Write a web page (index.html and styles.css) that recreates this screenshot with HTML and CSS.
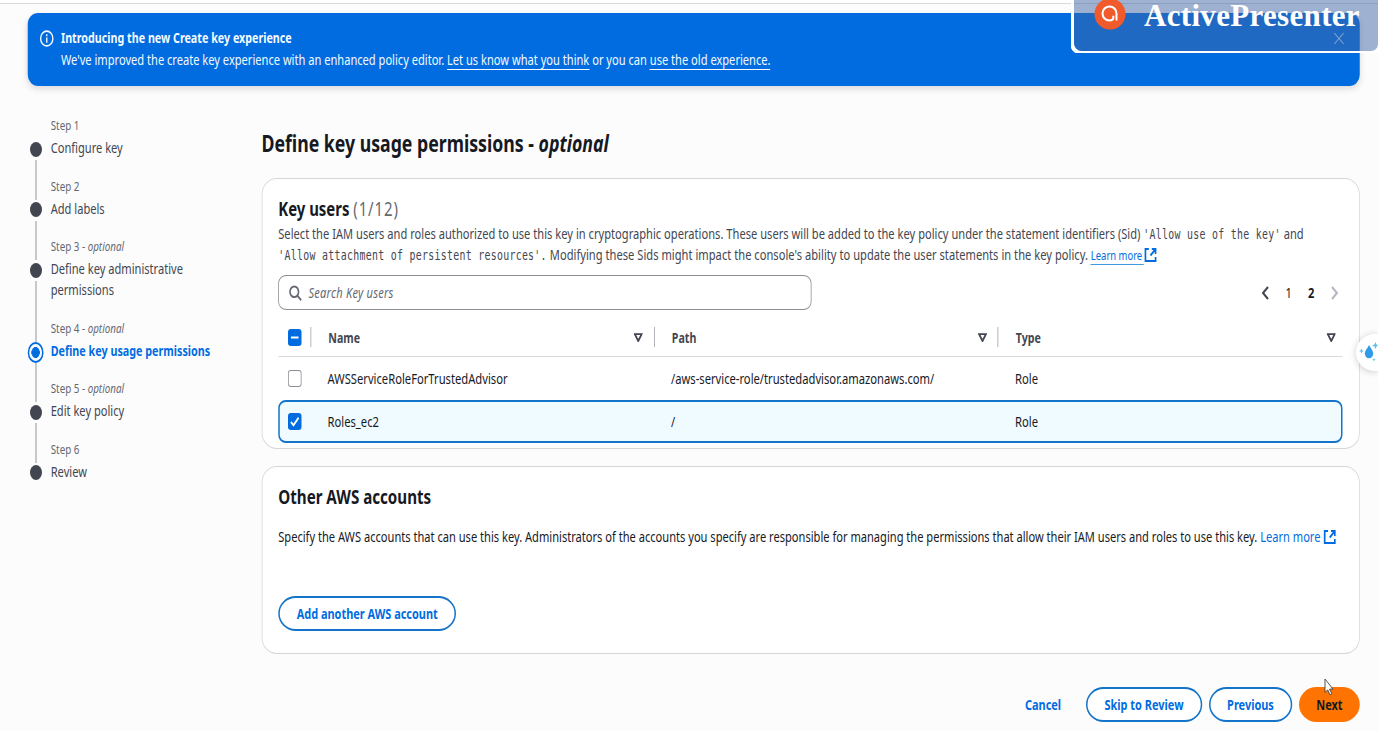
FILE: index.html
```html
<!DOCTYPE html>
<html lang="en">
<head>
<meta charset="utf-8">
<title>Create key</title>
<link rel="stylesheet" href="styles.css">
</head>
<body>
<div class="viewport">
<div class="app">
  <header class="banner">
    <svg class="info" viewBox="0 0 16 16" preserveAspectRatio="none"><circle cx="8" cy="8" r="7"/><path d="M8 7v5M8 4v1.8"/></svg>
    <div class="banner-text">
      <div class="banner-title">Introducing the new Create key experience</div>
      <div class="banner-body">We've improved the create key experience with an enhanced policy editor. <a>Let us know what you think</a> or you can <a>use the old experience.</a></div>
    </div>
    <svg class="close" viewBox="0 0 12 12" preserveAspectRatio="none"><path d="M1 1l10 10M11 1L1 11"/></svg>
  </header>
  <div class="body">
    <nav class="steps">
      <div class="step"><div class="label">Step 1</div><div class="name">Configure key</div><i class="dot"></i><i class="line"></i></div>
      <div class="step"><div class="label">Step 2</div><div class="name">Add labels</div><i class="dot"></i><i class="line"></i></div>
      <div class="step"><div class="label">Step 3 - <em>optional</em></div><div class="name">Define key administrative<br>permissions</div><i class="dot"></i><i class="line"></i></div>
      <div class="step active"><div class="label">Step 4 - <em>optional</em></div><div class="name">Define key usage permissions</div><i class="dot"></i><i class="line"></i></div>
      <div class="step"><div class="label">Step 5 - <em>optional</em></div><div class="name">Edit key policy</div><i class="dot"></i><i class="line"></i></div>
      <div class="step"><div class="label">Step 6</div><div class="name">Review</div><i class="dot"></i></div>
    </nav>
    <main class="main">
      <h1>Define key usage permissions - <em>optional</em></h1>
      <section class="card users">
        <h2>Key users <span class="count">(1/12)</span></h2>
        <p class="desc"><span class="d1">Select the IAM users and roles authorized to use this key in cryptographic operations. These users will be added to the key policy under the statement identifiers (Sid) <code>'Allow use of the key'</code> and</span><br><span><code>'Allow attachment of persistent resources'.</code><span class="rest"> Modifying these Sids might impact the console's ability to update the user statements in the key policy. </span><a class="link small">Learn more</a><svg class="ext" viewBox="0 0 16 16" preserveAspectRatio="none"><path d="M6 2H2v12h12v-4M9.500 2H14v5M14 2L8 8.500"/></svg></span></p>
        <div class="tools">
          <div class="search"><svg viewBox="0 0 16 16" preserveAspectRatio="none"><circle cx="6.8" cy="6.8" r="5.3"/><path d="M10.5 10.5l4.8 4.8"/></svg><em>Search Key users</em></div>
          <div class="pages">
            <svg viewBox="0 0 8 14" preserveAspectRatio="none"><path d="M6.500 1L1.500 7l5 6"/></svg><span>1</span><b>2</b><svg class="off" viewBox="0 0 8 14" preserveAspectRatio="none"><path d="M1.500 1l5 6-5 6"/></svg>
          </div>
        </div>
        <div class="table">
          <div class="row head">
            <div class="cell c-check"><div class="box on"><svg viewBox="0 0 16 16" preserveAspectRatio="none"><path d="M3.500 8h9"/></svg></div></div>
            <div class="cell"><span>Name</span><svg class="sort" viewBox="0 0 10 10" preserveAspectRatio="none"><path d="M1.200 1.200h7.600L5 8.400z"/></svg></div>
            <div class="cell"><span>Path</span><svg class="sort" viewBox="0 0 10 10" preserveAspectRatio="none"><path d="M1.200 1.200h7.600L5 8.400z"/></svg></div>
            <div class="cell"><span>Type</span><svg class="sort" viewBox="0 0 10 10" preserveAspectRatio="none"><path d="M1.200 1.200h7.600L5 8.400z"/></svg></div>
          </div>
          <div class="row plain">
            <div class="cell c-check"><div class="box"></div></div>
            <div class="cell"><span>AWSServiceRoleForTrustedAdvisor</span></div>
            <div class="cell"><span>/aws-service-role/trustedadvisor.amazonaws.com/</span></div>
            <div class="cell"><span>Role</span></div>
          </div>
          <div class="row selected">
            <div class="cell c-check"><div class="box on"><svg viewBox="0 0 16 16" preserveAspectRatio="none"><path d="M3.500 8.500l3 3L12.500 4.500"/></svg></div></div>
            <div class="cell"><span>Roles_ec2</span></div>
            <div class="cell"><span>/</span></div>
            <div class="cell"><span>Role</span></div>
          </div>
        </div>
      </section>
      <section class="card accounts">
        <h2>Other AWS accounts</h2>
        <p class="spec">Specify the AWS accounts that can use this key. Administrators of the accounts you specify are responsible for managing the permissions that allow their IAM users and roles to use this key. <a class="link">Learn more <svg class="ext" viewBox="0 0 16 16" preserveAspectRatio="none"><path d="M6 2H2v12h12v-4M9.500 2H14v5M14 2L8 8.500"/></svg></a></p>
        <button class="btn add">Add another AWS account</button>
      </section>
      <footer class="actions">
        <button class="btn cancel">Cancel</button>
        <button class="btn skip">Skip to Review</button>
        <button class="btn prev">Previous</button>
        <button class="btn next">Next</button>
      </footer>
    </main>
  </div>
</div>
<div class="assist">
  <svg viewBox="0 0 22 24"><path fill="#2f9be8" d="M13 5c2 3.500 4.200 5.500 4.200 8.500a4.200 4.800 0 0 1-8.400 0c0-3 2.700-5 4.200-8.500z"/><path fill="#5cc0ea" d="M5.500 8.500l.7 1.800 1.600.7-1.600.7-.7 1.800-.7-1.800-1.600-.7 1.600-.7zM19.500 2l1 2.500 1.500 1-1.500 1-1 2.500-1-2.500-2.500-1 2.500-1zM18 18l.5 1.300 1.300.5-1.300.5L18 21.500l-.5-1.200-1.300-.5 1.300-.5z"/></svg>
</div>
<div class="watermark">
  <div class="plate"></div>
  <svg viewBox="0 0 32 32"><circle cx="16" cy="16" r="15.500" fill="#f15a2b" stroke="none"/><path d="M22.500 22.500V15.500a7 7 0 1 0-7 7c2.600 0 3.800-1 3.800-2.800v-2" stroke="#fff" stroke-width="2"/></svg>
  <span>ActivePresenter</span>
</div>
<svg class="cursor" viewBox="0 0 10 18"><path d="M1 1v13.500l2.700-2.700 2.200 5 1.900-.9-2.200-4.800H9z" fill="#fff" stroke="#444" stroke-width=".9"/></svg>
</div>
</body>
</html>
```
FILE: styles.css
```css
/* The console is drawn on a wide canvas and condensed horizontally;
   --u is one horizontal pixel as seen on the page. */
:root { --sx: .75; --u: calc(1px / .75); }
* { box-sizing: border-box; }
body { margin: 0; font-family: "Noto Sans", "Open Sans", sans-serif; }
.viewport { position: relative; width: 1378px; height: 731px; overflow: hidden; background: #fcfcfd; }
.app { width: calc(var(--u) * 1378); height: 731px; transform: scaleX(var(--sx)); transform-origin: 0 0; padding-top: 12.500px; font-size: 14.800px; line-height: 21.400px; color: #16191f; white-space: nowrap; background: linear-gradient(#fff 3px, #d9d9dc 3px, #d9d9dc 4px, #fcfcfd 4px); }
svg { fill: none; stroke: currentColor; flex: none; }
a { text-decoration: none; }

.banner { height: 73.500px; margin: 0 calc(var(--u) * 18.5) 0 calc(var(--u) * 27.500); border-radius: 14px / 11px; background: #006ce0; color: #f4faff; display: flex; padding: 14px calc(var(--u) * 15) 0 calc(var(--u) * 12.500); box-shadow: 0 3px 7px #0002; }
.info { width: calc(var(--u) * 14); height: 17px; stroke-width: 1.6; margin: 3px calc(var(--u) * 7) 0 0; }
.banner-text { flex: 1; line-height: 22px; }
.banner-title { font-weight: 700; font-size: 14.300px; }
.banner-body { line-height: 20.500px; }
.banner a { border-bottom: 1px solid #f4faff; }
.close { width: calc(var(--u) * 11); height: 13px; margin-top: 5px; opacity: .8; }

.body { display: flex; padding-left: calc(var(--u) * 27); }
.steps { width: calc(var(--u) * 234.5); padding: 29.400px 0 0 calc(var(--u) * 23.700); color: #424650; }
.step { position: relative; padding-bottom: 17.100px; }
.label { font-size: 13.100px; line-height: 20px; padding-bottom: 2px; color: #656871; }
.name { line-height: 21.300px; }
.dot { position: absolute; left: calc(var(--u) * -21); top: 26.500px; width: calc(var(--u) * 12); height: 15px; border-radius: 50%; background: #424650; }
.line { position: absolute; left: calc(var(--u) * -15.500); top: 45px; bottom: -24px; width: calc(var(--u) * 1.200); background: #b4b7bd; }
.active .name { color: #006ce0; font-weight: 700; font-size: 14.350px; }
.active .dot { left: calc(var(--u) * -23); top: 24px; width: calc(var(--u) * 16); height: 21px; border: 2px solid #006ce0; background: radial-gradient(ellipse closest-side, #006ce0 62%, #fcfcfd 68%); }

.main { width: calc(var(--u) * 1098.500); padding-top: 41.300px; }
h1 { margin: 0; font-size: 23.600px; line-height: 32px; font-weight: 700; }
.card { border: 1px solid #d4d6da; border-radius: 20px / 16px; background: #fff; padding: 0 calc(var(--u) * 16); }
.users { margin-top: 18.700px; height: 271px; padding-top: 17px; }
h2 { margin: 0; font-size: 20.200px; line-height: 26px; font-weight: 700; }
.users h2 { font-size: 19.900px; }
.count { font-weight: 400; color: #656871; letter-spacing: 1.200px; }
.desc { margin: .600px 0 0; height: 43.400px; line-height: 21.700px; color: #424650; }
.d1 { letter-spacing: .025px; }
code { font: 13.200px/1 "DejaVu Sans Mono", monospace; letter-spacing: .39px; }
.rest { letter-spacing: .045px; }
.link, .ext { color: #006ce0; }
.small { font-size: 12.600px; border-bottom: 1px solid #3f9be0; padding-right: 2px; }
.ext { width: calc(var(--u) * 13.500); height: 16px; stroke-width: 2; vertical-align: -3px; }
.tools { display: flex; justify-content: space-between; align-items: center; margin-top: 9.500px; height: 35px; }
.search { width: calc(var(--u) * 533); height: 35px; border: 1px solid #8c8c94; border-radius: 11px / 8px; display: flex; align-items: center; padding-left: calc(var(--u) * 10); color: #656871; }
.search em, .pages span, .pages b { padding-bottom: 1px; }
.search svg { width: calc(var(--u) * 13); height: 16px; stroke-width: 2; margin-right: calc(var(--u) * 6.500); }
.search em { letter-spacing: .3px; }
.pages { width: calc(var(--u) * 84); display: flex; justify-content: space-between; align-items: center; padding: 0 calc(var(--u) * 4.500) 0 calc(var(--u) * 2); }
.pages svg { width: calc(var(--u) * 8); height: 14px; stroke-width: 2; color: #424650; }
.pages .off { color: #b4b7bd; }

.table { margin-top: 7px; width: calc(var(--u) * 1064); font-size: 14.950px; }
.row { display: grid; grid-template-columns: calc(var(--u) * 32) calc(var(--u) * 343.500) calc(var(--u) * 344) 1fr; align-items: center; height: 43px; }
.cell { padding: 0 calc(var(--u) * 11) 0 calc(var(--u) * 17.300); display: flex; align-items: center; justify-content: space-between; height: 20px; }
.cell > span { padding-bottom: 1px; }
.c-check { padding: 0 0 0 calc(var(--u) * 10); justify-content: flex-start; }
.head { height: 40px; padding-top: 1px; border-bottom: 1px solid #d9dbe0; font-weight: 700; font-size: 14.200px; color: #424650; }
.head .cell > span { padding-bottom: 0; }
.head .cell + .cell { border-left: 1.500px solid #9a9da5; }
.head .cell { padding-right: calc(var(--u) * 11); }
.head .cell:last-child { padding-right: calc(var(--u) * 6.500); }
.head .c-check { padding-left: calc(var(--u) * 10); padding-right: 0; }
.head .box { flex: none; }
.sort { width: calc(var(--u) * 9); height: 9.500px; stroke-width: 2; }
.selected { border: 2px solid #1474c9; border-radius: 10px / 8px; background: #f0fbff; }
.selected .cell { position: relative; left: -2px; }
.box { width: calc(var(--u) * 13.500); height: 17px; border: 1px solid #8c8c94; border-radius: 4px / 3px; }
.box.on { background: #006ce0; border: 0; color: #fff; }
.box svg { display: block; width: 100%; height: 100%; stroke-width: 2; }

.accounts { margin-top: 17.500px; height: 187.500px; padding-top: 16px; }
.spec { margin: 17px 0 0; }
.btn { font: 700 14.600px/20px "Noto Sans", sans-serif; height: 35px; padding: 0 0 2px; border: 2px solid #1474c9; border-radius: 24px / 18px; background: #fff; color: #006ce0; }
.add { width: calc(var(--u) * 178); margin-top: 48.500px; display: block; }
.actions { display: flex; padding-top: 33.500px; justify-content: flex-end; }
.cancel { border: 0; background: none; width: calc(var(--u) * 86); }
.skip { width: calc(var(--u) * 116); margin-right: calc(var(--u) * 7); }
.prev { width: calc(var(--u) * 83); margin-right: calc(var(--u) * 7); }
.next { width: calc(var(--u) * 61); background: #ff7300; border: 0; color: #16191f; }

/* Overlays floating above the page */
.assist { position: absolute; right: 0; top: 334px; width: 22px; height: 37px; border-radius: 19px 0 0 19px; background: #fff; box-shadow: 0 1px 7px #0003; }
.assist svg { position: absolute; left: 0; top: 6px; width: 22px; height: 24px; stroke: none; }
.watermark { position: absolute; right: 0; top: 0; width: 307px; height: 53px; overflow: hidden; border-radius: 0 0 0 2px; color: #fff; }
.plate { position: absolute; left: 3px; top: 0; right: 0; bottom: 2px; background: #4065a580; border-radius: 0 0 7px 8px; box-shadow: 0 0 0 4px #fff; }
.watermark svg { position: absolute; left: 23px; top: -2px; width: 32px; height: 32px; }
.watermark span { position: absolute; left: 73px; top: 0; font: 700 31px/32px "Liberation Serif", serif; letter-spacing: .32px; }
.cursor { position: absolute; left: 1324px; top: 678px; width: 10px; height: 18px; }
```
